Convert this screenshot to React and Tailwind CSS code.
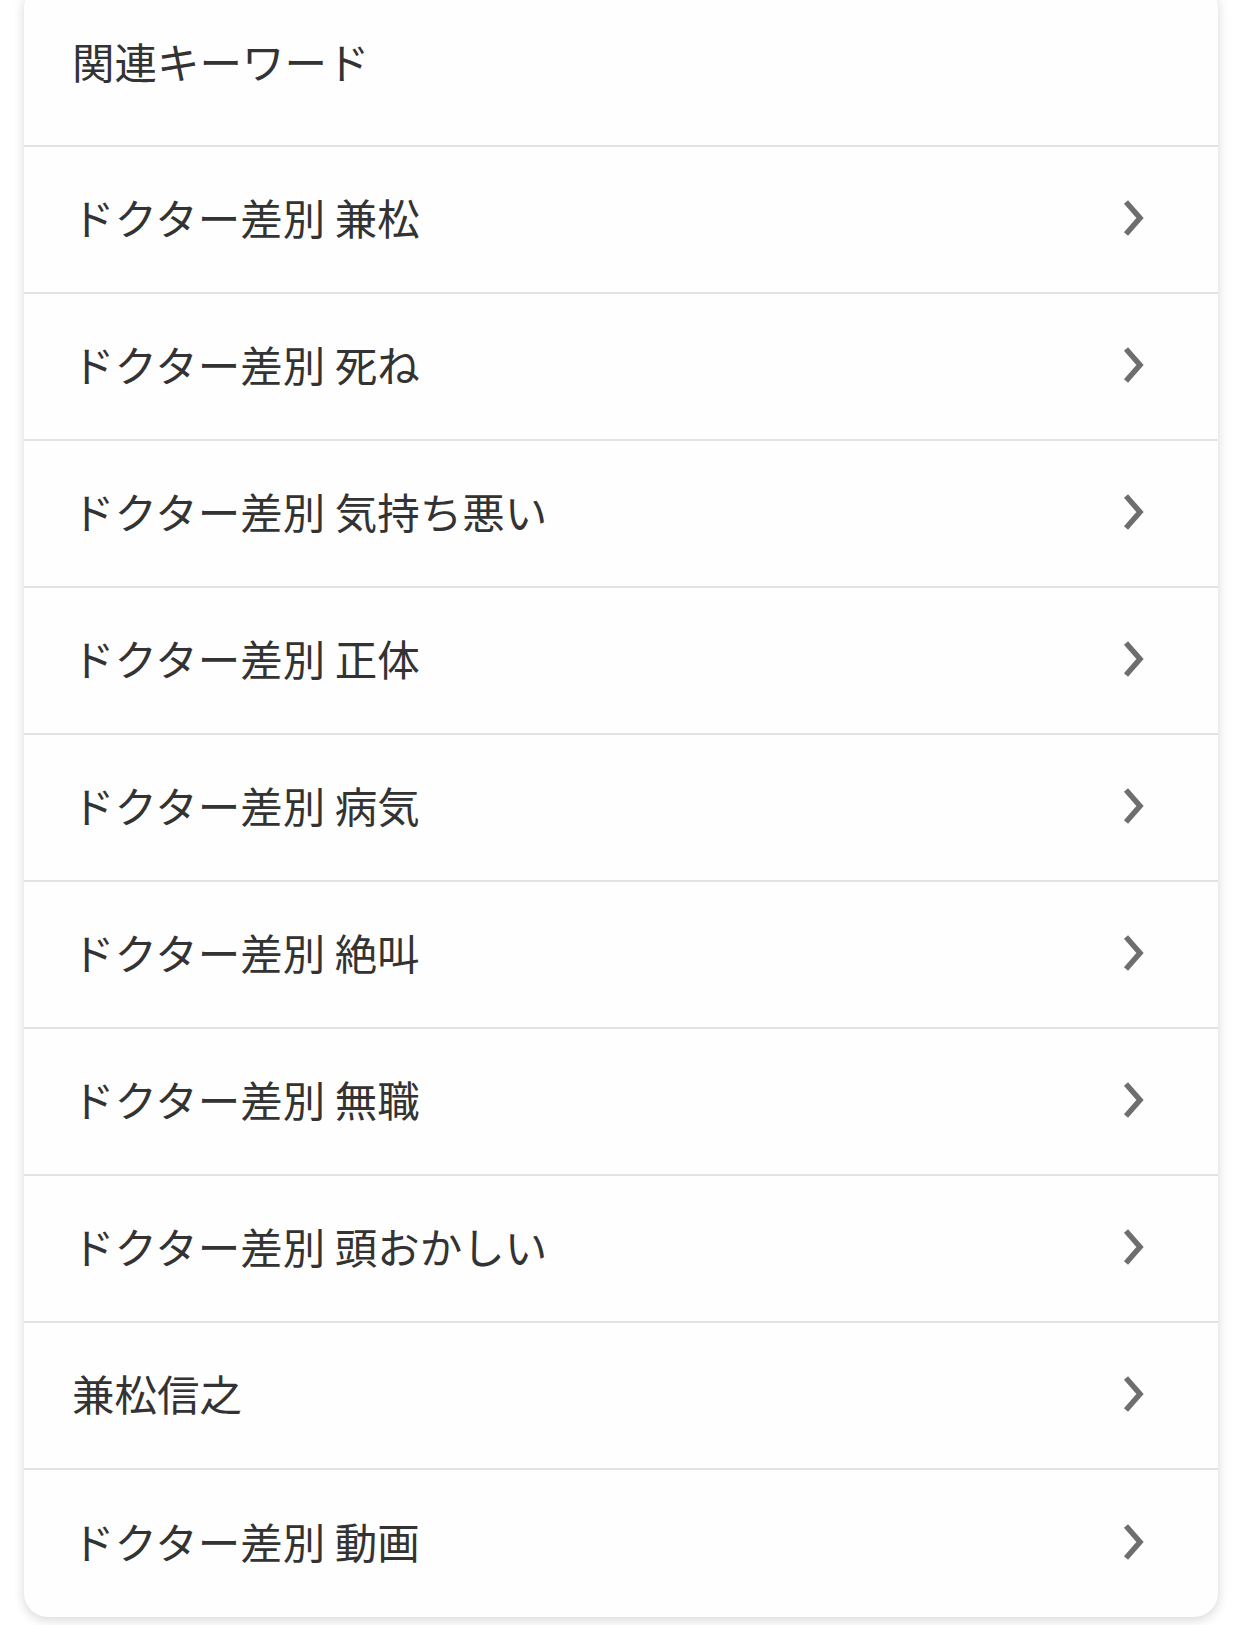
import React from "react";

const items = [
  "ドクター差別 兼松",
  "ドクター差別 死ね",
  "ドクター差別 気持ち悪い",
  "ドクター差別 正体",
  "ドクター差別 病気",
  "ドクター差別 絶叫",
  "ドクター差別 無職",
  "ドクター差別 頭おかしい",
  "兼松信之",
  "ドクター差別 動画",
];

function Chevron() {
  return (
    <svg width="30" height="42" viewBox="0 0 30 42" className="shrink-0">
      <path d="M8 5 L22 21 L8 37" fill="none" stroke="#6e6e6e" strokeWidth="5.5" strokeLinecap="butt" strokeLinejoin="miter" />
    </svg>
  );
}

export default function App() {
  return (
    <div
      className="w-[1242px] h-[1625px] bg-white overflow-hidden px-[24px]"
      style={{ fontFamily: '"Noto Sans CJK JP", "Noto Sans", sans-serif' }}
    >
      <div className="-mt-[16px] bg-[#fefefe] rounded-[24px] shadow-[0_3px_12px_rgba(0,0,0,0.16)] overflow-hidden">
        <div className="h-[163px] flex items-center pl-[48px] pb-[6px] border-b-2 border-[#e3e3e3]">
          <span className="text-[42.5px] text-[#333333] leading-none">関連キーワード</span>
        </div>
        {items.map((t, i) => (
          <div
            key={i}
            className={
              "h-[147px] flex items-center justify-between pl-[48px] pr-[70px] pb-[4px] " +
              (i < items.length - 1 ? "border-b-2 border-[#e3e3e3]" : "")
            }
          >
            <span className="text-[42.5px] text-[#333333] leading-none">{t}</span>
            <Chevron />
          </div>
        ))}
      </div>
    </div>
  );
}
